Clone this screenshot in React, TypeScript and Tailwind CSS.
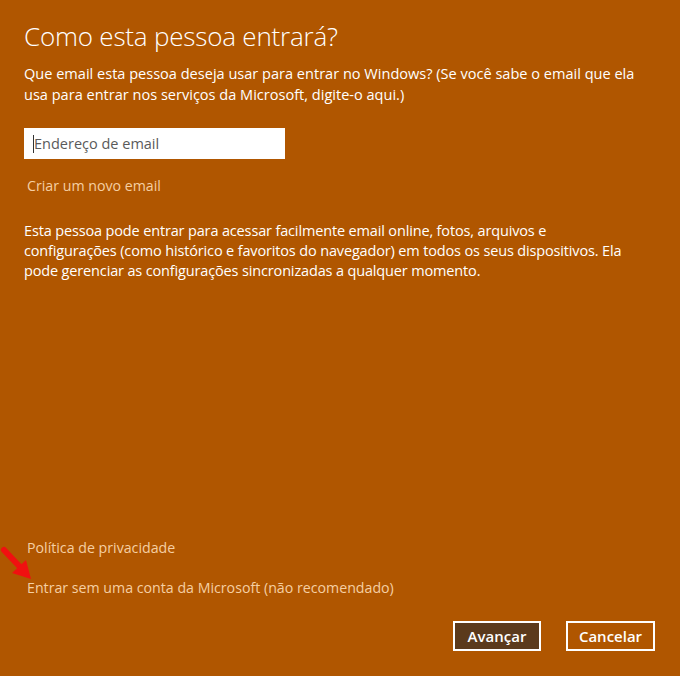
import React from "react";

export default function App() {
  return (
    <div
      className="relative w-[680px] h-[676px] bg-[#b05600] text-white overflow-hidden flex flex-col"
      style={{ fontFamily: '"Open Sans", "Noto Sans", sans-serif' }}
    >
      <div className="pl-[24px] pr-[20px] flex flex-col flex-1">
        <h1 className="mt-[20px] text-[26px] leading-[32px] font-light tracking-[-0.2px]">
          Como esta pessoa entrará?
        </h1>
        <p className="mt-[11px] text-[14.55px] leading-[21px] whitespace-nowrap">
          Que email esta pessoa deseja usar para entrar no Windows? (Se você sabe o email que ela
          <br />
          usa para entrar nos serviços da Microsoft, digite-o aqui.)
        </p>
        <div className="mt-[23px] w-[261px] h-[31px] bg-white flex items-center pl-[9px]">
          <span className="w-px h-[18px] bg-[#333]"></span>
          <span className="text-[14.5px] text-[#5a5a5a]">Endereço de email</span>
        </div>
        <a className="mt-[16px] text-[14.2px] leading-[21px] text-[#f5cfa3] pl-[3px]">
          Criar um novo email
        </a>
        <p className="mt-[25px] text-[14.5px] leading-[20px] tracking-[-0.15px] whitespace-nowrap">
          Esta pessoa pode entrar para acessar facilmente email online, fotos, arquivos e
          <br />
          configurações (como histórico e favoritos do navegador) em todos os seus dispositivos. Ela
          <br />
          pode gerenciar as configurações sincronizadas a qualquer momento.
        </p>
        <div className="flex-1"></div>
        <a className="pl-[3px] text-[14.2px] leading-[21px] text-[#f5cfa3]">
          Política de privacidade
        </a>
        <a className="mt-[19px] pl-[3px] text-[14.2px] leading-[21px] text-[#f5cfa3]">
          Entrar sem uma conta da Microsoft (não recomendado)
        </a>
        <div className="mt-[23px] mb-[25px] flex justify-end gap-[25px] pr-[5px]">
          <button className="w-[88px] h-[30px] border-2 border-white bg-[#5b3a1c] text-[15px] font-semibold text-white">
            Avançar
          </button>
          <button className="w-[89px] h-[30px] border-2 border-white text-[15px] font-semibold text-white">
            Cancelar
          </button>
        </div>
      </div>
      <svg className="absolute left-0 top-[545px]" width="36" height="38" viewBox="0 0 36 38">
        <line x1="4" y1="5" x2="21" y2="23" stroke="#f01010" strokeWidth="6" strokeLinecap="round" />
        <polygon points="31,34 12,28 26,15" fill="#f01010" />
      </svg>
    </div>
  );
}
